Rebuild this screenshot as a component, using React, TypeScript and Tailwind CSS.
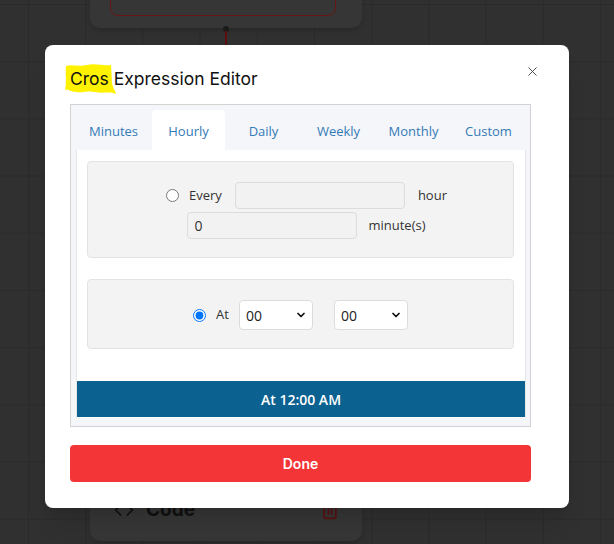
import { X, ChevronDown, Trash2, Code } from "lucide-react";

const tabs = ["Minutes", "Hourly", "Daily", "Weekly", "Monthly", "Custom"];

function Select() {
  return (
    <div className="relative w-[74px] h-[30px]">
      <select className="appearance-none w-full h-full bg-white border border-[#dcdcdc] rounded-[4px] pl-[6px] text-[14px] text-[#222] outline-none">
        <option>00</option>
      </select>
      <ChevronDown
        size={12}
        strokeWidth={3.5}
        className="absolute right-[6px] top-[9px] text-[#111] pointer-events-none"
      />
    </div>
  );
}

export default function App() {
  return (
    <div className="relative w-[614px] h-[544px] overflow-hidden bg-[#303030] [background-image:linear-gradient(to_right,#2a2a2a_1px,transparent_1px),linear-gradient(to_bottom,#2a2a2a_1px,transparent_1px)] [background-size:57.2px_57.2px] [background-position:28px_4px] font-['Open_Sans',sans-serif]">
      {/* canvas nodes behind the modal */}
      <div className="absolute left-[90px] top-[-40px] w-[272px] h-[68px] rounded-[10px] bg-[#363636] shadow-md">
        <div className="absolute left-[20px] top-[-10px] w-[226px] h-[66px] rounded-[8px] border border-[#6a1616]" />
      </div>
      <div className="absolute left-[223px] top-[26px] w-[6px] h-[6px] rounded-full bg-[#1a1a1a]" />
      <div className="absolute left-[225px] top-[31px] w-[2px] h-[16px] bg-[#5e0c0c]" />

      <div className="absolute left-[90px] top-[470px] w-[272px] h-[71px] rounded-[10px] bg-[#363636] shadow-md">
        <div className="flex items-center justify-between pl-[24px] pr-[22px] pt-[26px]">
          <div className="flex items-center gap-[12px] text-[#111] font-['Inter',sans-serif] font-bold text-[19px]">
            <Code size={20} strokeWidth={2} />
            <span>Code</span>
          </div>
          <Trash2 size={20} strokeWidth={2} className="text-[#5a1010]" />
        </div>
      </div>

      {/* modal */}
      <div className="absolute left-[45px] top-[45px] w-[524px] h-[463px] bg-white rounded-[8px] shadow-xl pl-[25px] pr-[38px] pt-[19px] pb-[26px]">
        <div className="relative flex items-center justify-between h-[28px] mb-[12px]">
          <h1 className="relative font-['Inter',sans-serif] text-[17.5px] text-[#111] leading-[28px] mt-[2px]">
            <svg
              className="absolute left-[-5px] top-[-2px] w-[52px] h-[32px]"
              viewBox="0 0 52 32"
            >
              <path
                d="M1 3 C8 1 14 4 22 2 C30 0 38 3 46 2 L47 20 C48 25 50 27 51 31 C44 28 38 31 30 29 C22 27 14 31 6 28 C3 27 2 26 0 27 C2 18 0 10 1 3 Z"
                fill="#fff200"
              />
            </svg>
            <span className="relative">Cros Expression Editor</span>
          </h1>
          <X size={15} strokeWidth={1.5} className="text-[#444] mr-[-9px] mt-[-14px]" />
        </div>

        <div className="border border-[#d3d3d3] bg-[#f5f6fa] pl-[5px] pr-[4px] pt-[5px] pb-[8px]">
          <div className="grid grid-cols-6 h-[40px]">
            {tabs.map((t) => (
              <div
                key={t}
                className={`mx-[1px] pt-[3px] flex items-center justify-center text-[13px] text-[#337ab7] rounded-t-[4px] ${
                  t === "Hourly" ? "bg-white" : ""
                }`}
              >
                {t}
              </div>
            ))}
          </div>

          <div className="bg-white border-x border-[#e6e6e6] h-[268px] flex flex-col">
            <div className="pl-[10px] pr-[11px] pt-[11px] flex flex-col gap-[21px]">
              <div className="h-[97px] bg-[#f3f3f3] border border-[#e3e3e3] rounded-[4px] pl-[12px] pt-[2px] flex flex-col items-center justify-center gap-[3px] text-[13px] text-[#333]">
                <div className="flex items-center">
                  <input type="radio" name="mode" className="w-[13px] h-[13px] m-0 mr-[10px]" />
                  <span>Every</span>
                  <input
                    type="text"
                    className="w-[170px] h-[27px] mx-[13px] bg-[#f2f2f2] border border-[#dcdcdc] rounded-[4px] px-[6px] text-[14px] outline-none"
                  />
                  <span>hour</span>
                </div>
                <div className="flex items-center">
                  <input
                    type="text"
                    defaultValue="0"
                    className="w-[170px] h-[27px] mr-[11px] bg-[#f2f2f2] border border-[#dcdcdc] rounded-[4px] px-[6px] text-[14px] text-[#333] outline-none"
                  />
                  <span>minute(s)</span>
                </div>
              </div>

              <div className="h-[70px] bg-[#f3f3f3] border border-[#e3e3e3] rounded-[4px] pt-[2px] flex items-center justify-center text-[13px] text-[#333]">
                <input type="radio" name="mode" defaultChecked className="w-[13px] h-[13px] m-0 mr-[10px] accent-[#0075ff]" />
                <span className="mr-[10px]">At</span>
                <Select />
                <div className="w-[21px]" />
                <Select />
              </div>
            </div>

            <div className="mt-auto mb-[1px] h-[36px] bg-[#0b6190] flex items-center justify-center text-white text-[14px] font-semibold">
              At 12:00 AM
            </div>
          </div>
        </div>

        <button className="mt-[18px] w-full h-[37px] rounded-[4px] bg-[#f43538] text-white text-[14px] font-semibold font-['Inter',sans-serif]">
          Done
        </button>
      </div>
    </div>
  );
}
